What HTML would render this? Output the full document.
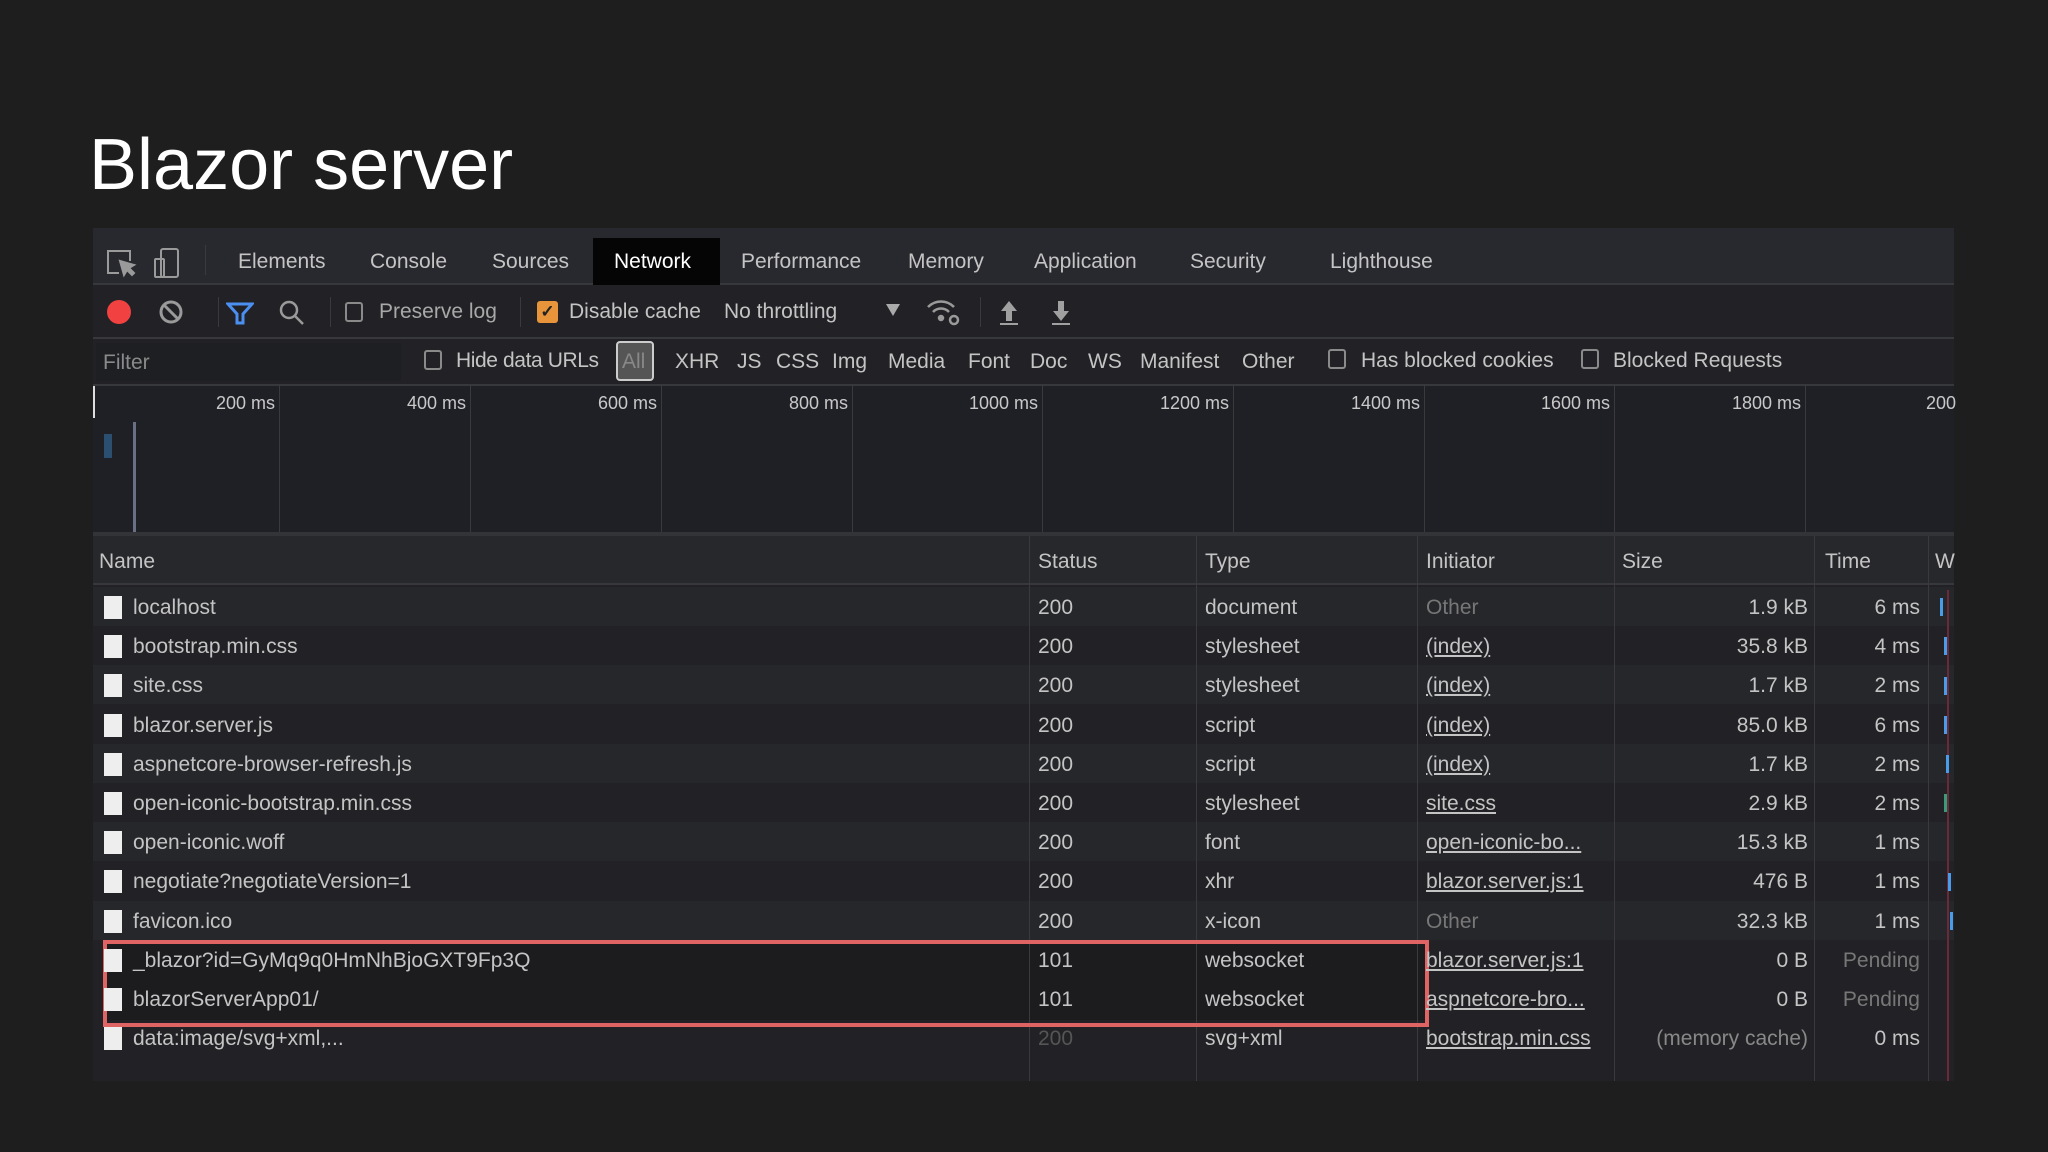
<!DOCTYPE html>
<html><head><meta charset="utf-8"><style>
*{margin:0;padding:0;box-sizing:border-box}
body{width:2048px;height:1152px;background:#1e1e1e;position:relative;overflow:hidden;font-family:"Liberation Sans",sans-serif;color:#c8c8c8}
.a{position:absolute;white-space:nowrap}
.t{font-size:21px;line-height:26px;color:#c4c4c4}
.r{text-align:right}
.u{text-decoration:underline}
.cb{position:absolute;width:18px;height:20px;border:2px solid #8a8a8a;border-radius:3px}
.vl{position:absolute;width:1px;background:#3a3a3e}
</style></head><body>
<div class="a" style="left:89px;top:122px;font-size:72px;line-height:86px;color:#fff">Blazor server</div>

<div class="a" style="left:93px;top:228px;width:1861px;height:853px;background:#222226"></div>
<div class="a" style="left:93px;top:228px;width:1861px;height:57px;background:#28292e;border-bottom:2px solid #37383c"></div>
<div class="a" style="left:593px;top:238px;width:127px;height:47px;background:#050505"></div>
<svg class="a" style="left:105px;top:247px" width="90" height="34" viewBox="0 0 90 34" fill="none" stroke="#9a9a9a" stroke-width="2">
<path d="M14 26H3V4h22v10"/><path d="M15 14l4 14 3-5 5 5 2-2-5-5 5-3z" fill="#9a9a9a"/>
<rect x="56" y="2" width="17" height="28" rx="2"/><rect x="50" y="12" width="9" height="18" rx="1"/></svg>
<div class="vl" style="left:205px;top:245px;height:30px"></div>
<div class="a t" style="left:238px;top:249px">Elements</div>
<div class="a t" style="left:370px;top:249px">Console</div>
<div class="a t" style="left:492px;top:249px">Sources</div>
<div class="a t" style="left:614px;top:249px;color:#fff">Network</div>
<div class="a t" style="left:741px;top:249px">Performance</div>
<div class="a t" style="left:908px;top:249px">Memory</div>
<div class="a t" style="left:1034px;top:249px">Application</div>
<div class="a t" style="left:1190px;top:249px">Security</div>
<div class="a t" style="left:1330px;top:249px">Lighthouse</div>

<div class="a" style="left:93px;top:337px;width:1861px;height:2px;background:#37383c"></div>
<div class="a" style="left:107px;top:300px;width:24px;height:24px;border-radius:50%;background:#f24141"></div>
<svg class="a" style="left:158px;top:299px" width="26" height="26" viewBox="0 0 26 26" fill="none" stroke="#9a9a9a" stroke-width="3"><circle cx="13" cy="13" r="10"/><line x1="6" y1="6" x2="20" y2="20"/></svg>
<div class="vl" style="left:218px;top:297px;height:30px"></div>
<svg class="a" style="left:226px;top:301px" width="28" height="24" viewBox="0 0 28 24" fill="none" stroke="#4b8ff0" stroke-width="3"><path d="M2 3h24l-9 10v9h-6v-9z"/></svg>
<svg class="a" style="left:278px;top:299px" width="28" height="28" viewBox="0 0 28 28" fill="none" stroke="#9a9a9a" stroke-width="2.5"><circle cx="11" cy="11" r="8"/><line x1="17" y1="17" x2="25" y2="25"/></svg>
<div class="vl" style="left:330px;top:297px;height:30px"></div>
<div class="cb" style="left:345px;top:302px"></div>
<div class="a t" style="left:379px;top:299px;color:#a8a8a8">Preserve log</div>
<div class="vl" style="left:520px;top:297px;height:30px"></div>
<div class="a" style="left:537px;top:301px;width:21px;height:22px;border-radius:3px;background:#e8943a;color:#222;font-size:17px;line-height:22px;text-align:center;font-weight:bold">✓</div>
<div class="a t" style="left:569px;top:299px">Disable cache</div>
<div class="a t" style="left:724px;top:299px">No throttling</div>
<div class="a" style="left:886px;top:304px;width:0;height:0;border-left:7px solid transparent;border-right:7px solid transparent;border-top:12px solid #aaa"></div>
<svg class="a" style="left:926px;top:297px" width="36" height="30" viewBox="0 0 36 30" fill="none" stroke="#9a9a9a" stroke-width="2.5"><path d="M2 10a18 18 0 0 1 26 0"/><path d="M7 15a11 11 0 0 1 16 0"/><circle cx="15" cy="21" r="2" fill="#9a9a9a"/><circle cx="28" cy="23" r="4"/></svg>
<div class="vl" style="left:980px;top:297px;height:30px"></div>
<svg class="a" style="left:998px;top:299px" width="22" height="28" viewBox="0 0 22 28" fill="#a0a0a0"><path d="M11 2l8 10h-5v10H8V12H3z"/><rect x="2" y="24" width="18" height="2"/></svg>
<svg class="a" style="left:1050px;top:299px" width="22" height="28" viewBox="0 0 22 28" fill="#a0a0a0"><path d="M11 22l8-10h-5V2H8v10H3z"/><rect x="2" y="24" width="18" height="2"/></svg>

<div class="a" style="left:93px;top:384px;width:1861px;height:2px;background:#37383c"></div>
<div class="a" style="left:96px;top:343px;width:305px;height:38px;background:#1e1f23"></div>
<div class="a t" style="left:103px;top:350px;color:#8a8a8a">Filter</div>
<div class="cb" style="left:424px;top:350px"></div>
<div class="a t" style="left:456px;top:348px;letter-spacing:-0.4px">Hide data URLs</div>
<div class="a" style="left:616px;top:341px;width:38px;height:40px;border:2px solid #ccc;border-radius:4px;background:#555"></div>
<div class="a t" style="left:622px;top:349px;color:#888">All</div>
<div class="a t" style="left:675px;top:349px">XHR</div>
<div class="a t" style="left:737px;top:349px">JS</div>
<div class="a t" style="left:776px;top:349px">CSS</div>
<div class="a t" style="left:832px;top:349px">Img</div>
<div class="a t" style="left:888px;top:349px">Media</div>
<div class="a t" style="left:968px;top:349px">Font</div>
<div class="a t" style="left:1030px;top:349px">Doc</div>
<div class="a t" style="left:1088px;top:349px">WS</div>
<div class="a t" style="left:1140px;top:349px">Manifest</div>
<div class="a t" style="left:1242px;top:349px">Other</div>
<div class="cb" style="left:1328px;top:349px"></div>
<div class="a t" style="left:1361px;top:348px">Has blocked cookies</div>
<div class="cb" style="left:1581px;top:349px"></div>
<div class="a t" style="left:1613px;top:348px">Blocked Requests</div>

<div class="a" style="left:93px;top:386px;width:1861px;height:147px;background:#1f2025"></div>
<div class="a" style="left:93px;top:386px;width:2px;height:32px;background:#ddd"></div>
<div class="a" style="left:133px;top:422px;width:3px;height:110px;background:#6a6f86"></div>
<div class="a" style="left:104px;top:434px;width:8px;height:24px;background:#2a4f70"></div>
<div class="vl" style="left:279px;top:386px;height:147px"></div>
<div class="vl" style="left:470px;top:386px;height:147px"></div>
<div class="vl" style="left:661px;top:386px;height:147px"></div>
<div class="vl" style="left:852px;top:386px;height:147px"></div>
<div class="vl" style="left:1042px;top:386px;height:147px"></div>
<div class="vl" style="left:1233px;top:386px;height:147px"></div>
<div class="vl" style="left:1424px;top:386px;height:147px"></div>
<div class="vl" style="left:1614px;top:386px;height:147px"></div>
<div class="vl" style="left:1805px;top:386px;height:147px"></div>
<div class="a r" style="left:175px;width:100px;top:393px;font-size:18px;color:#c8c8c8">200 ms</div>
<div class="a r" style="left:366px;width:100px;top:393px;font-size:18px;color:#c8c8c8">400 ms</div>
<div class="a r" style="left:557px;width:100px;top:393px;font-size:18px;color:#c8c8c8">600 ms</div>
<div class="a r" style="left:748px;width:100px;top:393px;font-size:18px;color:#c8c8c8">800 ms</div>
<div class="a r" style="left:938px;width:100px;top:393px;font-size:18px;color:#c8c8c8">1000 ms</div>
<div class="a r" style="left:1129px;width:100px;top:393px;font-size:18px;color:#c8c8c8">1200 ms</div>
<div class="a r" style="left:1320px;width:100px;top:393px;font-size:18px;color:#c8c8c8">1400 ms</div>
<div class="a r" style="left:1510px;width:100px;top:393px;font-size:18px;color:#c8c8c8">1600 ms</div>
<div class="a r" style="left:1701px;width:100px;top:393px;font-size:18px;color:#c8c8c8">1800 ms</div>
<div class="a" style="left:1926px;top:393px;font-size:18px;color:#c8c8c8">200</div>
<div class="a" style="left:93px;top:532px;width:1861px;height:4px;background:#333438"></div>

<div class="a" style="left:93px;top:536px;width:1861px;height:49px;background:#27282c;border-bottom:2px solid #37383c"></div>
<div class="a t" style="left:99px;top:549px">Name</div>
<div class="a t" style="left:1038px;top:549px">Status</div>
<div class="a t" style="left:1205px;top:549px">Type</div>
<div class="a t" style="left:1426px;top:549px">Initiator</div>
<div class="a t" style="left:1622px;top:549px">Size</div>
<div class="a t" style="left:1825px;top:549px">Time</div>
<div class="a t" style="left:1935px;top:549px">W</div>

<div class="a" style="left:93px;top:587px;width:1861px">
<div style="position:relative;height:470px">
<div class="a" style="left:0;top:0;width:1861px;height:39px;background:#26272b"></div>
<div class="a" style="left:0;top:78px;width:1861px;height:39px;background:#26272b"></div>
<div class="a" style="left:0;top:157px;width:1861px;height:39px;background:#26272b"></div>
<div class="a" style="left:0;top:235px;width:1861px;height:39px;background:#26272b"></div>
<div class="a" style="left:0;top:314px;width:1861px;height:39px;background:#26272b"></div>
<div class="a" style="left:12px;top:353px;width:1323px;height:80px;background:#1c1c1e"></div>
</div></div>
<div class="vl" style="left:1029px;top:536px;height:545px"></div>
<div class="vl" style="left:1196px;top:536px;height:545px"></div>
<div class="vl" style="left:1417px;top:536px;height:545px"></div>
<div class="vl" style="left:1614px;top:536px;height:545px"></div>
<div class="vl" style="left:1814px;top:536px;height:545px"></div>
<div class="vl" style="left:1928px;top:536px;height:545px"></div>
<div class="a" style="left:1947px;top:590px;width:2px;height:491px;background:#6a2a3a"></div>

<div class="a" style="left:103px;top:940px;width:1326px;height:87px;border:4px solid #e06464"></div>

<div class="a" style="left:104px;top:596px">
<div style="width:18px;height:23px;background:#eee;margin-bottom:16.2px"></div><div style="width:18px;height:23px;background:#eee;margin-bottom:16.2px"></div><div style="width:18px;height:23px;background:#eee;margin-bottom:16.2px"></div><div style="width:18px;height:23px;background:#eee;margin-bottom:16.2px"></div><div style="width:18px;height:23px;background:#eee;margin-bottom:16.2px"></div><div style="width:18px;height:23px;background:#eee;margin-bottom:16.2px"></div><div style="width:18px;height:23px;background:#eee;margin-bottom:16.2px"></div><div style="width:18px;height:23px;background:#eee;margin-bottom:16.2px"></div><div style="width:18px;height:23px;background:#eee;margin-bottom:16.2px"></div><div style="width:18px;height:23px;background:#eee;margin-bottom:16.2px"></div><div style="width:18px;height:23px;background:#eee;margin-bottom:16.2px"></div><div style="width:18px;height:23px;background:#eee"></div>
</div>
<div class="a t" style="left:133px;top:588px;line-height:39.2px">localhost<br>bootstrap.min.css<br>site.css<br>blazor.server.js<br>aspnetcore-browser-refresh.js<br>open-iconic-bootstrap.min.css<br>open-iconic.woff<br>negotiate?negotiateVersion=1<br>favicon.ico<br>_blazor?id=GyMq9q0HmNhBjoGXT9Fp3Q<br>blazorServerApp01/<br>data:image/svg+xml,...</div>
<div class="a t" style="left:1038px;top:588px;line-height:39.2px">200<br>200<br>200<br>200<br>200<br>200<br>200<br>200<br>200<br>101<br>101<br><span style="color:#555">200</span></div>
<div class="a t" style="left:1205px;top:588px;line-height:39.2px">document<br>stylesheet<br>stylesheet<br>script<br>script<br>stylesheet<br>font<br>xhr<br>x-icon<br>websocket<br>websocket<br>svg+xml</div>
<div class="a t" style="left:1426px;top:588px;line-height:39.2px"><span style="color:#777">Other</span><br><span class="u">(index)</span><br><span class="u">(index)</span><br><span class="u">(index)</span><br><span class="u">(index)</span><br><span class="u">site.css</span><br><span class="u">open-iconic-bo...</span><br><span class="u">blazor.server.js:1</span><br><span style="color:#777">Other</span><br><span class="u">blazor.server.js:1</span><br><span class="u">aspnetcore-bro...</span><br><span class="u">bootstrap.min.css</span></div>
<div class="a t r" style="left:1608px;width:200px;top:588px;line-height:39.2px">1.9 kB<br>35.8 kB<br>1.7 kB<br>85.0 kB<br>1.7 kB<br>2.9 kB<br>15.3 kB<br>476 B<br>32.3 kB<br>0 B<br>0 B<br><span style="color:#888">(memory cache)</span></div>
<div class="a t r" style="left:1780px;width:140px;top:588px;line-height:39.2px">6 ms<br>4 ms<br>2 ms<br>6 ms<br>2 ms<br>2 ms<br>1 ms<br>1 ms<br>1 ms<br><span style="color:#777">Pending</span><br><span style="color:#777">Pending</span><br>0 ms</div>
<div class="a" style="left:1940px;top:598px;width:3px;height:18px;background:#4a9be8"></div>
<div class="a" style="left:1944px;top:637px;width:3px;height:18px;background:#4a9be8"></div>
<div class="a" style="left:1944px;top:677px;width:3px;height:18px;background:#4a9be8"></div>
<div class="a" style="left:1944px;top:716px;width:3px;height:18px;background:#4a9be8"></div>
<div class="a" style="left:1946px;top:755px;width:3px;height:18px;background:#4a9be8"></div>
<div class="a" style="left:1944px;top:794px;width:3px;height:18px;background:#3a9a7a"></div>
<div class="a" style="left:1948px;top:873px;width:3px;height:18px;background:#4a9be8"></div>
<div class="a" style="left:1950px;top:912px;width:3px;height:18px;background:#4a9be8"></div>
</body></html>
